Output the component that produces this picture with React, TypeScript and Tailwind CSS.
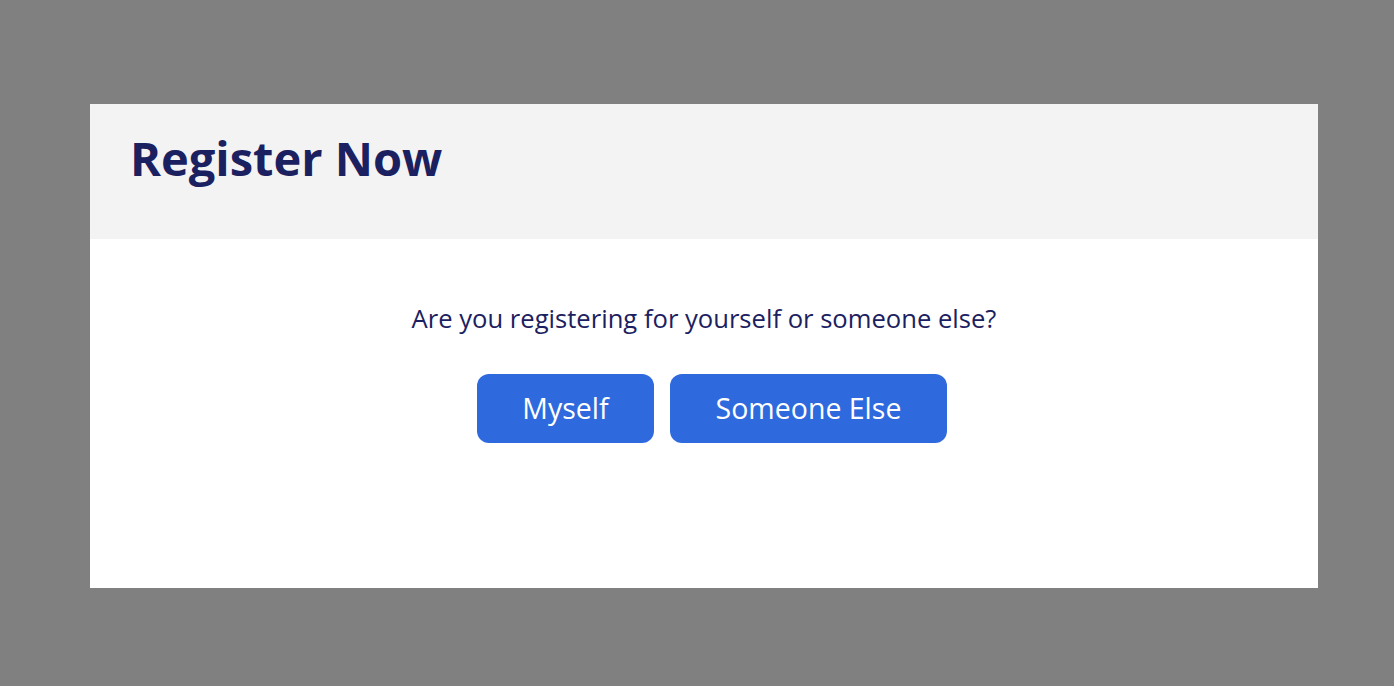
export default function App() {
  return (
    <div className="min-h-screen w-full bg-[#808080] pt-[104px] pl-[90px]" style={{ fontFamily: '"Open Sans", "Liberation Sans", sans-serif' }}>
      <div className="w-[1228px] h-[484px] bg-white flex flex-col">
        <div className="h-[135px] bg-[#f3f3f3] flex items-center px-10 pb-[26px]">
          <h1 className="text-[47px] leading-none font-bold text-[#1b2160]">Register Now</h1>
        </div>
        <div className="flex flex-col items-center pt-[62px]">
          <p className="text-[25.6px] leading-[36px] text-[#1b2160]">Are you registering for yourself or someone else?</p>
          <div className="flex gap-4 mt-[37px] ml-4">
            <button className="w-[177px] h-[69px] rounded-xl bg-[#2e6ade] text-white text-[28.5px]">Myself</button>
            <button className="w-[277px] h-[69px] rounded-xl bg-[#2e6ade] text-white text-[28.5px]">Someone Else</button>
          </div>
        </div>
      </div>
    </div>
  );
}
